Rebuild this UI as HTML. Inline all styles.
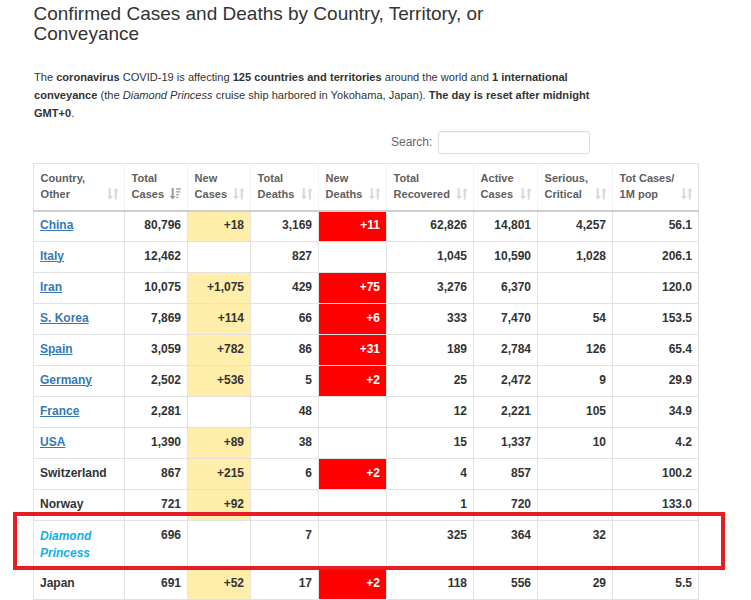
<!DOCTYPE html>
<html><head><meta charset="utf-8">
<style>
html,body{margin:0;padding:0;background:#fff;}
body{width:751px;height:600px;overflow:hidden;position:relative;font-family:"Liberation Sans",sans-serif;color:#333;}
h1{position:absolute;left:33.5px;top:4px;margin:0;font-weight:normal;font-size:19px;line-height:20px;color:#333;white-space:nowrap;}
.intro{position:absolute;left:34px;top:68px;margin:0;font-size:11.08px;line-height:18px;color:#333;white-space:nowrap;}
.search{position:absolute;left:391px;top:135px;font-size:12px;line-height:14px;color:#666;}
.inp{position:absolute;left:438px;top:131px;width:150px;height:21px;border:1px solid #dcdcdc;border-radius:3px;box-shadow:inset 0 1px 1px rgba(0,0,0,.04);}
table{position:absolute;left:33px;top:163px;border-collapse:collapse;table-layout:fixed;font-size:12px;}
td,th{border:1px solid #e2e2e2;padding:0 6px;}
th{border-left-color:#f4f4f4;border-right-color:#f4f4f4;padding-left:6.6px;}
th:first-child{border-left-color:#e2e2e2;}th:last-child{border-right-color:#e2e2e2;}
th{text-align:left;vertical-align:top;color:#5e5e5e;font-weight:bold;font-size:11px;line-height:16px;position:relative;border-bottom:2px solid #cfcfcf;padding-top:6px;box-sizing:border-box;}
td{vertical-align:top;font-weight:bold;text-align:right;line-height:17px;padding-top:6px;padding-bottom:6px;color:#333;}
td.c{text-align:left;}
td.c a{color:#337ab7;text-decoration:underline;}
tr.h{height:47px;}
tr.r td{height:18px;}
tr.f td{height:18px;padding-top:5px;}
tr.d td{height:35px;}
.y{background:#FFEEAA;}
.red{background:#ff0000;color:#fff;}
.dp{color:#14aee8;font-style:italic;}
.si{position:absolute;right:5.2px;top:24px;width:12px;height:12px;}
.si.s{right:6.4px;}
.box{position:absolute;left:13px;top:512px;width:704px;height:50px;border:4px solid #e81c24;}
</style></head><body>
<h1>Confirmed Cases and Deaths by Country, Territory, or<br>Conveyance</h1>
<p class="intro">The <b>coronavirus</b> COVID-19 is affecting <b>125 countries and territories</b> around the world and <b>1 international</b><br><b>conveyance</b> (the <i>Diamond Princess</i> cruise ship harbored in Yokohama, Japan). <b>The day is reset after midnight</b><br><b>GMT+0</b>.</p>
<div class="search">Search:</div>
<div class="inp"></div>
<table>
<colgroup><col style="width:91px"><col style="width:63px"><col style="width:63px"><col style="width:68px"><col style="width:68px"><col style="width:87px"><col style="width:64px"><col style="width:75px"><col style="width:86px"></colgroup>
<tr class="h"><th>Country,<br>Other<svg class="si" viewBox="0 0 12 12"><path d="M1.7 0h2.1v8H6.2L2.75 11.4 0.2 8h1.5z M7.7 11.5h2.1V3.3h2L9.05 0 6.3 3.3h1.4z" fill="#d9d9d9"/></svg></th><th>Total<br>Cases<svg class="si s" viewBox="0 0 12 12"><path d="M2.7 0h2v8h1.8L3.7 11.4 0.8 8h1.9z" fill="#9a9a9a"/><rect x="7.2" y="0.3" width="5" height="1.4" fill="#9a9a9a"/><rect x="7.2" y="3.2" width="4" height="1.3" fill="#9a9a9a"/><rect x="7.2" y="6" width="3" height="1.2" fill="#9a9a9a"/><rect x="7.4" y="8.6" width="1.8" height="1.6" fill="#9a9a9a"/></svg></th><th>New<br>Cases<svg class="si" viewBox="0 0 12 12"><path d="M1.7 0h2.1v8H6.2L2.75 11.4 0.2 8h1.5z M7.7 11.5h2.1V3.3h2L9.05 0 6.3 3.3h1.4z" fill="#d9d9d9"/></svg></th><th>Total<br>Deaths<svg class="si" viewBox="0 0 12 12"><path d="M1.7 0h2.1v8H6.2L2.75 11.4 0.2 8h1.5z M7.7 11.5h2.1V3.3h2L9.05 0 6.3 3.3h1.4z" fill="#d9d9d9"/></svg></th><th>New<br>Deaths<svg class="si" viewBox="0 0 12 12"><path d="M1.7 0h2.1v8H6.2L2.75 11.4 0.2 8h1.5z M7.7 11.5h2.1V3.3h2L9.05 0 6.3 3.3h1.4z" fill="#d9d9d9"/></svg></th><th>Total<br>Recovered<svg class="si" viewBox="0 0 12 12"><path d="M1.7 0h2.1v8H6.2L2.75 11.4 0.2 8h1.5z M7.7 11.5h2.1V3.3h2L9.05 0 6.3 3.3h1.4z" fill="#d9d9d9"/></svg></th><th>Active<br>Cases<svg class="si" viewBox="0 0 12 12"><path d="M1.7 0h2.1v8H6.2L2.75 11.4 0.2 8h1.5z M7.7 11.5h2.1V3.3h2L9.05 0 6.3 3.3h1.4z" fill="#d9d9d9"/></svg></th><th>Serious,<br>Critical<svg class="si" viewBox="0 0 12 12"><path d="M1.7 0h2.1v8H6.2L2.75 11.4 0.2 8h1.5z M7.7 11.5h2.1V3.3h2L9.05 0 6.3 3.3h1.4z" fill="#d9d9d9"/></svg></th><th>Tot Cases/<br>1M pop<svg class="si" viewBox="0 0 12 12"><path d="M1.7 0h2.1v8H6.2L2.75 11.4 0.2 8h1.5z M7.7 11.5h2.1V3.3h2L9.05 0 6.3 3.3h1.4z" fill="#d9d9d9"/></svg></th></tr>
<tr class="r f"><td class="c"><a>China</a></td><td>80,796</td><td class="y">+18</td><td>3,169</td><td class="red">+11</td><td>62,826</td><td>14,801</td><td>4,257</td><td>56.1</td></tr>
<tr class="r"><td class="c"><a>Italy</a></td><td>12,462</td><td></td><td>827</td><td></td><td>1,045</td><td>10,590</td><td>1,028</td><td>206.1</td></tr>
<tr class="r"><td class="c"><a>Iran</a></td><td>10,075</td><td class="y">+1,075</td><td>429</td><td class="red">+75</td><td>3,276</td><td>6,370</td><td></td><td>120.0</td></tr>
<tr class="r"><td class="c"><a>S. Korea</a></td><td>7,869</td><td class="y">+114</td><td>66</td><td class="red">+6</td><td>333</td><td>7,470</td><td>54</td><td>153.5</td></tr>
<tr class="r"><td class="c"><a>Spain</a></td><td>3,059</td><td class="y">+782</td><td>86</td><td class="red">+31</td><td>189</td><td>2,784</td><td>126</td><td>65.4</td></tr>
<tr class="r"><td class="c"><a>Germany</a></td><td>2,502</td><td class="y">+536</td><td>5</td><td class="red">+2</td><td>25</td><td>2,472</td><td>9</td><td>29.9</td></tr>
<tr class="r"><td class="c"><a>France</a></td><td>2,281</td><td></td><td>48</td><td></td><td>12</td><td>2,221</td><td>105</td><td>34.9</td></tr>
<tr class="r"><td class="c"><a>USA</a></td><td>1,390</td><td class="y">+89</td><td>38</td><td></td><td>15</td><td>1,337</td><td>10</td><td>4.2</td></tr>
<tr class="r"><td class="c">Switzerland</td><td>867</td><td class="y">+215</td><td>6</td><td class="red">+2</td><td>4</td><td>857</td><td></td><td>100.2</td></tr>
<tr class="r"><td class="c">Norway</td><td>721</td><td class="y">+92</td><td></td><td></td><td>1</td><td>720</td><td></td><td>133.0</td></tr>
<tr class="r d"><td class="c dp"><span style="position:relative;top:1px">Diamond<br>Princess</span></td><td>696</td><td></td><td>7</td><td></td><td>325</td><td>364</td><td>32</td><td></td></tr>
<tr class="r"><td class="c">Japan</td><td>691</td><td class="y">+52</td><td>17</td><td class="red">+2</td><td>118</td><td>556</td><td>29</td><td>5.5</td></tr>
</table>
<div class="box"></div>
</body></html>
